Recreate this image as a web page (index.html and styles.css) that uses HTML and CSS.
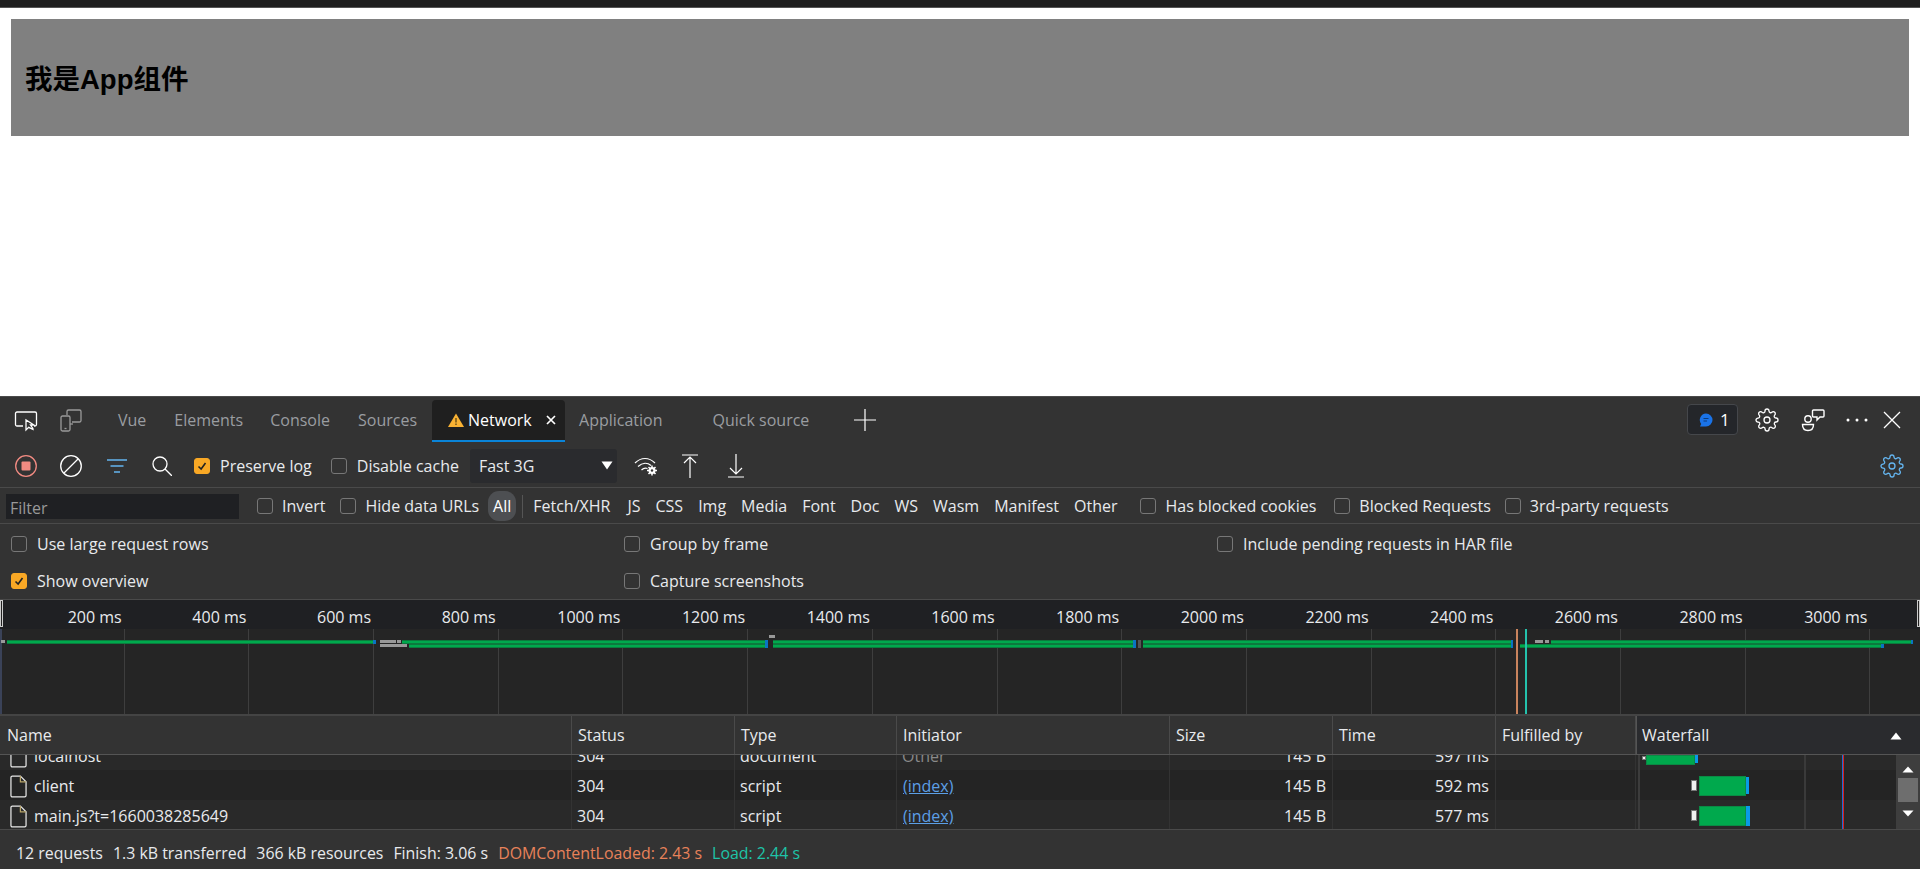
FILE: index.html
```html
<!DOCTYPE html>
<html lang="zh">
<head>
<meta charset="utf-8">
<title>App</title>
<link rel="stylesheet" href="styles.css">
</head>
<body>
<div class="topbar"></div>
<main class="page">
  <section class="app"><h2>我是App组件</h2></section>
</main>
<section class="devtools">
  <div class="tabbar">
    <svg class="ico ico-inspect" viewBox="0 0 24 24" fill="none" stroke="#fff" stroke-width="1.3"><path d="M9 18H3a1.5 1.5 0 0 1-1.500-1.500V5.500A1.500 1.500 0 0 1 3 4h18a1.500 1.500 0 0 1 1.500 1.500v11A1.500 1.500 0 0 1 21 18h-1"/><path d="M12 12l0 10 2.700-2.600 4.300 2-.1-1-2.400-3.400h3.500z" fill="#333"/></svg>
    <svg class="ico ico-device" viewBox="0 0 24 24" fill="none" stroke="#9a9a9a" stroke-width="1.300"><path d="M8 7V3.500A1.500 1.500 0 0 1 9.500 2h11A1.500 1.500 0 0 1 22 3.500v9a1.500 1.500 0 0 1-1.500 1.500H13"/><path d="M14 16h-3"/><rect x="2" y="8" width="9" height="15" rx="1.500"/><path d="M5.500 20.500h2"/></svg>
    <span class="tab tab-vue">Vue</span>
    <span class="tab tab-el">Elements</span>
    <span class="tab tab-con">Console</span>
    <span class="tab tab-src">Sources</span>
    <div class="tab-active">
      <svg class="warn" viewBox="0 0 16 14"><path d="M8 0.500L16 14H0z" fill="#f9b233"/><path d="M7.400 5h1.200v4.500H7.400zM7.400 10.500h1.200v1.500H7.400z" fill="#4a3a10"/></svg>
      <span class="tab-name">Network</span>
      <svg class="tab-x" viewBox="0 0 10 10" stroke="#fff" stroke-width="1.700"><path d="M1 1l8 8M9 1l-8 8"/></svg>
    </div>
    <span class="tab tab-app">Application</span>
    <span class="tab tab-qs">Quick source</span>
    <svg class="ico-plus" viewBox="0 0 22 22" stroke="#fff" stroke-width="1.200"><path d="M11 0v22M0 11h22"/></svg>
    <div class="tab-right">
      <div class="chip">
        <svg class="chip-ico" viewBox="0 0 14 14"><path d="M7 0.500a6.500 6.500 0 0 1 0 13H1l1.200-2.500A6.500 6.500 0 0 1 7 0.500z" fill="#1a73e8"/><path d="M4.500 5.500h5M4.500 8h3.500" stroke="#0d3b7a" stroke-width="1"/></svg>
        <span>1</span>
      </div>
      <svg class="gear gear-w" viewBox="0 0 24 24" fill="none" stroke="#fff" stroke-width="1.300"><use href="#gearp"/></svg>
      <svg class="ico-fb" viewBox="0 0 24 24" fill="none" stroke="#fff" stroke-width="1.400"><circle cx="7" cy="11" r="3.200"/><path d="M1.500 16.500h11c0 4-2 6-5.500 6s-5.500-2-5.500-6z"/><path d="M12.500 2h9.500a1 1 0 0 1 1 1v5a1 1 0 0 1-1 1h-3l-3 3v-3h-3.500a1 1 0 0 1-1-1V3a1 1 0 0 1 1-1z"/></svg>
      <svg class="ico-dots" viewBox="0 0 22 4" fill="#fff"><circle cx="2" cy="2" r="1.500"/><circle cx="11" cy="2" r="1.500"/><circle cx="20" cy="2" r="1.500"/></svg>
      <svg class="ico-close" viewBox="0 0 18 18" stroke="#fff" stroke-width="1.300"><path d="M1 1l16 16M17 1L1 17"/></svg>
    </div>
  </div>

  <div class="toolbar">
    <svg class="t-ico t-rec" viewBox="0 0 22 22" fill="none"><circle cx="11" cy="11" r="10.300" stroke="#f28b82" stroke-width="1.300"/><rect x="6.500" y="6.500" width="9" height="9" rx="1" fill="#f28b82"/></svg>
    <svg class="t-ico t-clr" viewBox="0 0 22 22" fill="none" stroke="#fff" stroke-width="1.300"><circle cx="11" cy="11" r="10.300"/><path d="M18 4L4 18"/></svg>
    <svg class="t-ico t-flt" viewBox="0 0 20 14" stroke="#64b5f0" stroke-width="1.400"><path d="M0 1h20M3.500 7h13M7 13h6"/></svg>
    <svg class="t-ico t-src" viewBox="0 0 20 20" fill="none" stroke="#fff" stroke-width="1.300"><circle cx="8" cy="8" r="7"/><path d="M13 13l7 7"/></svg>
    <label class="cb-row cb-preserve"><span class="cb on"><svg viewBox="0 0 16 16" fill="none" stroke="#222" stroke-width="1.800"><path d="M4 8.500l3 3 5-7"/></svg></span><span>Preserve log</span></label>
    <label class="cb-row cb-disable"><span class="cb"></span><span>Disable cache</span></label>
    <div class="select"><span>Fast 3G</span><svg class="sel-arrow" viewBox="0 0 12 9"><path d="M0.500 0.500h11L6 8.500z" fill="#fff"/></svg></div>
    <svg class="t-ico t-wifi" viewBox="0 0 24 20" fill="none" stroke="#fff" stroke-width="1.200"><path d="M1 7c6-6 14-6 20 0M4 10.500c4.500-4 9.500-4 13 -1M7.500 14c2-2 4-2.300 6-1.500"/><circle cx="18" cy="14.500" r="3.500" fill="#fff" stroke="none"/><path d="M18 9.500v10M13 14.500h10M14.500 11l7 7M21.500 11l-7 7" stroke-width="1.500"/><circle cx="18" cy="14.500" r="1.200" fill="#333" stroke="none"/></svg>
    <svg class="t-ico t-up" viewBox="0 0 18 24" fill="none" stroke="#fff" stroke-width="1.200"><path d="M1 1h16M9 24V3M3 9l6-6 6 6"/></svg>
    <svg class="t-ico t-down" viewBox="0 0 18 24" fill="none" stroke="#fff" stroke-width="1.200"><path d="M1 23h16M9 0v20M3 14l6 6 6-6"/></svg>
    <svg class="gear gear-b" viewBox="0 0 24 24" fill="none" stroke="#64b5f0" stroke-width="1.300"><use href="#gearp"/></svg>
  </div>

  <div class="filterbar">
    <div class="filter-input">Filter</div>
    <label class="cb-row fb-invert"><span class="cb"></span><span>Invert</span></label>
    <label class="cb-row fb-hide"><span class="cb"></span><span>Hide data URLs</span></label>
    <span class="all">All</span>
    <span class="sep"></span>
    <div class="types">
      <span class="type-first">Fetch/XHR</span><span>JS</span><span>CSS</span><span>Img</span><span>Media</span><span>Font</span><span>Doc</span><span>WS</span><span>Wasm</span><span>Manifest</span><span>Other</span>
    </div>
    <label class="cb-row fb-cookies"><span class="cb"></span><span>Has blocked cookies</span></label>
    <label class="cb-row fb-blocked"><span class="cb"></span><span>Blocked Requests</span></label>
    <label class="cb-row fb-third"><span class="cb"></span><span>3rd-party requests</span></label>
  </div>

  <div class="options">
    <label class="cb-row"><span class="cb"></span><span>Use large request rows</span></label>
    <label class="cb-row"><span class="cb"></span><span>Group by frame</span></label>
    <label class="cb-row"><span class="cb"></span><span>Include pending requests in HAR file</span></label>
    <label class="cb-row"><span class="cb on"><svg viewBox="0 0 16 16" fill="none" stroke="#222" stroke-width="1.800"><path d="M4 8.500l3 3 5-7"/></svg></span><span>Show overview</span></label>
    <label class="cb-row"><span class="cb"></span><span>Capture screenshots</span></label>
  </div>

  <div class="overview">
    <div class="ticks">
      <div class="tick"><span>200 ms</span></div><div class="tick"><span>400 ms</span></div><div class="tick"><span>600 ms</span></div><div class="tick"><span>800 ms</span></div><div class="tick"><span>1000 ms</span></div><div class="tick"><span>1200 ms</span></div><div class="tick"><span>1400 ms</span></div><div class="tick"><span>1600 ms</span></div><div class="tick"><span>1800 ms</span></div><div class="tick"><span>2000 ms</span></div><div class="tick"><span>2200 ms</span></div><div class="tick"><span>2400 ms</span></div><div class="tick"><span>2600 ms</span></div><div class="tick"><span>2800 ms</span></div><div class="tick"><span>3000 ms</span></div><div class="tick tick-last"></div>
    </div>
    <div class="handle handle-l"></div>
    <div class="handle handle-r"></div>
    <i class="ov s r1" style="left:1px;width:4px"></i>
    <i class="ov g r1" style="left:7px;width:366px"></i><i class="ov b r1" style="left:373px;width:3px"></i>
    <i class="ov s r1" style="left:380px;width:16px"></i><i class="ov s r1" style="left:397px;width:4px"></i>
    <i class="ov s r2" style="left:380px;width:27px"></i>
    <i class="ov g r1" style="left:402px;width:363px"></i><i class="ov g r2" style="left:409px;width:356px"></i>
    <i class="ov b r1" style="left:765px;width:3px"></i><i class="ov b r2" style="left:765px;width:3px"></i>
    <i class="ov s r0" style="left:769px;width:6px"></i>
    <i class="ov g r1" style="left:773px;width:360px"></i><i class="ov g r2" style="left:773px;width:360px"></i>
    <i class="ov b r1" style="left:1133px;width:3px"></i><i class="ov b r2" style="left:1133px;width:3px"></i>
    <i class="ov d r1" style="left:1138px;width:3px"></i><i class="ov d r2" style="left:1138px;width:3px"></i>
    <i class="ov g r1" style="left:1143px;width:368px"></i><i class="ov g r2" style="left:1143px;width:368px"></i>
    <i class="ov b r1" style="left:1511px;width:2px"></i><i class="ov b r2" style="left:1511px;width:2px"></i>
    <i class="ov g r2" style="left:1520px;width:361px"></i><i class="ov b r2" style="left:1881px;width:3px"></i>
    <i class="ov s r1" style="left:1535px;width:8px"></i><i class="ov s r1" style="left:1545px;width:4px"></i>
    <i class="ov g r1" style="left:1551px;width:360px"></i><i class="ov b r1" style="left:1911px;width:2px"></i>
    <i class="vmark vm-o"></i><i class="vmark vm-t"></i>
  </div>

  <div class="thead">
    <div class="th">Name</div><div class="th">Status</div><div class="th">Type</div><div class="th">Initiator</div><div class="th">Size</div><div class="th">Time</div><div class="th">Fulfilled by</div>
    <div class="th th-wf">Waterfall<svg class="sort" viewBox="0 0 12 8"><path d="M6 0.500L11.500 7.500H0.500z" fill="#fff"/></svg></div>
  </div>

  <div class="tbody">
    <div class="rows">
      <div class="tr tr-first alt"><div class="td td-name"><svg class="file" viewBox="0 0 18 24" fill="none" stroke="#e8e8e8" stroke-width="1.300"><path d="M1 2.500A1.500 1.500 0 0 1 2.500 1H11l6 6v14.500a1.500 1.500 0 0 1-1.500 1.500h-13A1.500 1.500 0 0 1 1 21.500z"/><path d="M11 1v6h6" stroke="#b8a56a"/></svg>localhost</div><div class="td">304</div><div class="td">document</div><div class="td muted">Other</div><div class="td num">145 B</div><div class="td num">597 ms</div><div class="td"></div><div class="td"></div></div>
      <div class="tr"><div class="td td-name"><svg class="file" viewBox="0 0 18 24" fill="none" stroke="#e8e8e8" stroke-width="1.300"><path d="M1 2.500A1.500 1.500 0 0 1 2.500 1H11l6 6v14.500a1.500 1.500 0 0 1-1.500 1.500h-13A1.500 1.500 0 0 1 1 21.500z"/><path d="M11 1v6h6" stroke="#b8a56a"/></svg>client</div><div class="td">304</div><div class="td">script</div><div class="td link">(index)</div><div class="td num">145 B</div><div class="td num">592 ms</div><div class="td"></div><div class="td"></div></div>
      <div class="tr alt"><div class="td td-name"><svg class="file" viewBox="0 0 18 24" fill="none" stroke="#e8e8e8" stroke-width="1.300"><path d="M1 2.500A1.500 1.500 0 0 1 2.500 1H11l6 6v14.500a1.500 1.500 0 0 1-1.500 1.500h-13A1.500 1.500 0 0 1 1 21.500z"/><path d="M11 1v6h6" stroke="#b8a56a"/></svg>main.js?t=1660038285649</div><div class="td">304</div><div class="td">script</div><div class="td link">(index)</div><div class="td num">145 B</div><div class="td num">577 ms</div><div class="td"></div><div class="td"></div></div>
    </div>
    <div class="wf">
      <i class="wf-grid"></i>
      <i class="wf-line"></i>
      <i class="wb wait" style="left:2px;top:1px;width:4px;height:4px"></i>
      <i class="wb green" style="left:6px;top:0;width:49px;height:10px"></i>
      <i class="wb blue" style="left:55px;top:0;width:3px;height:8px"></i>
      <i class="wb wait" style="left:51px;top:25px;width:6px;height:11px"></i>
      <i class="wb green" style="left:59px;top:21px;width:47px;height:20px"></i>
      <i class="wb blue" style="left:106px;top:22px;width:3px;height:17px"></i>
      <i class="wb wait" style="left:51px;top:55px;width:6px;height:11px"></i>
      <i class="wb green" style="left:59px;top:51px;width:47px;height:20px"></i>
      <i class="wb blue" style="left:106px;top:51px;width:4px;height:20px"></i>
      <div class="scrollbar">
        <svg class="sb-arrow" viewBox="0 0 12 7"><path d="M6 0.500L11.500 6.500H0.500z" fill="#fff"/></svg>
        <div class="sb-thumb"></div>
        <svg class="sb-arrow" viewBox="0 0 12 7"><path d="M0.500 0.500h11L6 6.500z" fill="#fff"/></svg>
      </div>
    </div>
  </div>

  <div class="statusbar">
    <span>12 requests</span><span>1.3 kB transferred</span><span>366 kB resources</span><span>Finish: 3.06 s</span><span class="dcl">DOMContentLoaded: 2.43 s</span><span class="load">Load: 2.44 s</span>
  </div>
</section>
<svg class="defs" aria-hidden="true"><defs><g id="gearp"><path d="M12 15a3 3 0 1 0 0-6 3 3 0 0 0 0 6z"/><path d="M19.400 15a1.650 1.650 0 0 0 .33 1.820l.06.06a2 2 0 0 1 0 2.830 2 2 0 0 1-2.830 0l-.06-.06a1.650 1.650 0 0 0-1.820-.33 1.650 1.650 0 0 0-1 1.510V21a2 2 0 0 1-2 2 2 2 0 0 1-2-2v-.09A1.650 1.650 0 0 0 9 19.400a1.650 1.650 0 0 0-1.820.33l-.06.06a2 2 0 0 1-2.830 0 2 2 0 0 1 0-2.830l.06-.06a1.650 1.650 0 0 0 .33-1.820 1.650 1.650 0 0 0-1.510-1H3a2 2 0 0 1-2-2 2 2 0 0 1 2-2h.09A1.650 1.650 0 0 0 4.600 9a1.650 1.650 0 0 0-.33-1.820l-.06-.06a2 2 0 0 1 0-2.830 2 2 0 0 1 2.830 0l.06.06a1.650 1.650 0 0 0 1.820.33H9a1.650 1.650 0 0 0 1-1.510V3a2 2 0 0 1 2-2 2 2 0 0 1 2 2v.09a1.650 1.650 0 0 0 1 1.510 1.650 1.650 0 0 0 1.820-.33l.06-.06a2 2 0 0 1 2.830 0 2 2 0 0 1 0 2.830l-.06.06a1.650 1.650 0 0 0-.33 1.820V9a1.650 1.650 0 0 0 1.510 1H21a2 2 0 0 1 2 2 2 2 0 0 1-2 2h-.09a1.650 1.650 0 0 0-1.510 1z"/></g></defs></svg>
</body>
</html>
```
FILE: styles.css
```css
* { box-sizing: border-box; }
html, body { margin: 0; height: 100%; overflow: hidden; }
body {
  display: flex; flex-direction: column; height: 869px; background: #fff;
  font-family: "Open Sans", "Noto Sans", sans-serif; font-size: 16px; color: #e8eaed;
}
.defs { position: absolute; width: 0; height: 0; }
.topbar { height: 8px; background: #1f1f1f; border-bottom: 1px solid #555; flex: none; }
.page { flex: 1; padding: 11px 11px 0; min-height: 0; }
.app { height: 117px; background: #808080; display: flex; align-items: center; padding: 0 0 2px 14px; }
.app h2 { margin: 0; font: bold 27.500px "Liberation Sans", "Noto Sans CJK SC", sans-serif; color: #000; }

.devtools { flex: none; height: 473px; background: #333; border-top: 1px solid #4a4a4a; display: flex; flex-direction: column; }

.tabbar { height: 47px; display: flex; align-items: center; flex: none; background: #333; padding: 0 0 2px 14px; }
.ico { width: 24px; height: 24px; flex: none; }
.ico-device { margin-left: 21px; }
.tab { color: #9a9da1; white-space: nowrap; }
.tab-vue { margin-left: 35px; }
.tab-el { margin-left: 28px; }
.tab-con { margin-left: 27px; }
.tab-src { margin-left: 28px; }
.tab-active { margin-left: 15px; align-self: flex-start; margin-top: 3px; height: 42px; width: 133px; background: #1f1f1f; border-bottom: 2px solid #0a84d8; border-radius: 4px 4px 0 0; display: flex; align-items: center; padding-left: 16px; color: #fff; }
.warn { width: 16px; height: 14px; flex: none; }
.tab-name { margin-left: 4px; }
.tab-x { width: 10px; height: 10px; margin-left: auto; margin-right: 9px; }
.tab-app { margin-left: 14px; }
.tab-qs { margin-left: 50px; }
.ico-plus { width: 22px; height: 22px; margin-left: 45px; flex: none; }
.tab-right { margin-left: auto; display: flex; align-items: center; padding-right: 19px; }
.chip { width: 51px; height: 31px; background: #24262a; border: 1px solid #45474b; border-radius: 4px; display: flex; align-items: center; padding-left: 11px; gap: 7px; color: #fff; font-size: 17px; }
.chip-ico { width: 14px; height: 14px; }
.gear { width: 24px; height: 24px; flex: none; }
.gear-w { margin-left: 17px; }
.ico-fb { width: 24px; height: 24px; margin-left: 22px; }
.ico-dots { width: 22px; height: 4px; margin-left: 21px; }
.ico-close { width: 18px; height: 18px; margin-left: 15px; }

.toolbar { height: 44px; flex: none; display: flex; align-items: center; border-bottom: 1px solid #4a4a4a; padding: 0 16px 0 15px; }
.t-ico { flex: none; }
.t-rec { width: 22px; height: 22px; }
.t-clr { width: 22px; height: 22px; margin-left: 23px; }
.t-flt { width: 20px; height: 14px; margin-left: 25px; }
.t-src { width: 20px; height: 20px; margin-left: 25px; }
.cb-row { display: flex; align-items: center; gap: 10px; white-space: nowrap; color: #e8eaed; }
.cb { width: 16px; height: 16px; flex: none; border: 1px solid #777; border-radius: 3px; background: #333; display: block; }
.cb.on { background: #f9a825; border-color: #f9a825; }
.cb.on svg { display: block; width: 14px; height: 14px; }
.cb-preserve { margin-left: 22px; }
.cb-disable { margin-left: 19px; }
.select { width: 147px; height: 34px; margin-left: 11px; background: #2a2b2e; border-radius: 3px; display: flex; align-items: center; padding-left: 9px; }
.sel-arrow { width: 12px; height: 9px; margin-left: auto; margin-right: 4px; }
.t-wifi { width: 24px; height: 20px; margin-left: 17px; }
.t-up { width: 18px; height: 24px; margin-left: 23px; }
.t-down { width: 18px; height: 24px; margin-left: 28px; }
.gear-b { margin-left: auto; }

.filterbar { height: 36px; flex: none; display: flex; align-items: center; border-bottom: 1px solid #4a4a4a; padding: 1px 0 0 6px; }
.filter-input { width: 233px; height: 25px; background: #1f2023; color: #999; padding: 2px 4px 0; line-height: 24px; }
.fb-invert { margin-left: 18px; gap: 9px; }
.fb-hide { margin-left: 14px; }
.all { margin-left: 9px; width: 28px; height: 30px; background: #4d4f52; border-radius: 11px; display: flex; align-items: center; justify-content: center; color: #fff; }
.sep { width: 1px; height: 23px; background: #555; margin-left: 6px; }
.types { display: flex; gap: 15px; margin-left: 10px; }
.type-first { margin-right: 2px; }
.fb-cookies { margin-left: 23px; gap: 9px; }
.fb-blocked { margin-left: 18px; gap: 9px; }
.fb-third { margin-left: 14px; gap: 9px; }

.options { height: 76px; flex: none; display: grid; grid-template-columns: 613px 593px 1fr; grid-template-rows: 1fr 1fr; padding: 2px 0 0 11px; align-items: center; border-bottom: 1px solid #4a4a4a; }

.overview { height: 116px; flex: none; background: #252525; position: relative; border-bottom: 2px solid #444; overflow: hidden; box-shadow: inset 2px 0 0 #3a4258; }
.ticks { display: flex; height: 100%; }
.tick { width: 124.700px; flex: none; border-right: 1px solid #3e3e3e; }
.tick span { display: flex; height: 29px; align-items: center; justify-content: flex-end; padding: 4px 3px 0 0; color: #e8eaed; background: #1f2023; margin-right: -1px; }
.tick-last { border-right: 0; }
.tick-last::before { content: ""; display: block; height: 29px; background: #1f2023; }
.handle { position: absolute; top: 0; width: 3px; height: 27px; background: #222; border: 1px solid #ccc; }
.handle-l { left: 0; }
.handle-r { right: 0; }
.ov { position: absolute; height: 4px; display: block; }
.r0 { top: 35px; }
.r1 { top: 40px; }
.r2 { top: 44px; }
.g { background: #00a94d; border-block: 1px solid #0c7a3e; }
.b { background: #0a74c2; }
.s { background: #999; height: 3px; }
.d { background: #555; }
.vmark { position: absolute; top: 29px; bottom: 0; display: block; }
.vm-o { left: 1516px; width: 2px; background: #c9835d; }
.vm-t { left: 1525px; width: 2px; background: #24c2ad; }

.thead { height: 39px; flex: none; display: grid; grid-template-columns: 572px 163px 162px 273px 163px 163px 140px 1fr; border-bottom: 1px solid #555; }
.th { display: flex; align-items: center; padding-left: 6px; border-right: 1px solid #4a4a4a; color: #e8eaed; }
.th:first-child { padding-left: 7px; }
.th-wf { background: #2a2b2e; border-right: 0; padding-left: 5px; position: relative; border-left: 1px solid #555; }
.sort { width: 12px; height: 8px; position: absolute; right: 18px; top: 16px; }

.tbody { height: 75px; flex: none; position: relative; overflow: hidden; border-bottom: 1px solid #4a4a4a; background: #262626; }
.rows { margin-top: -15px; }
.tr { height: 30px; display: grid; grid-template-columns: 572px 163px 162px 273px 163px 163px 140px 1fr; align-items: stretch; background: #242424; }
.tr.alt { background: #292929; }
.td { display: flex; align-items: center; padding: 2px 0 0 5px; border-right: 1px solid #333; white-space: nowrap; color: #e8eaed; }
.td-name { padding-left: 10px; gap: 7px; }
.num { justify-content: flex-end; padding: 2px 6px 0 0; }
.muted { color: #8a8a8a; }
.link { color: #5c9fe6; text-decoration: underline; padding-left: 6px; }
.file { width: 17px; height: 23px; flex: none; }
.wf { position: absolute; left: 1638px; top: 0; right: 0; bottom: 0; border-left: 2px solid #3c3c3c; }
.wf-grid { position: absolute; left: 164px; top: 0; bottom: 0; width: 2px; background: #3a3a3a; display: block; }
.wf-line { position: absolute; left: 202px; top: 0; bottom: 0; width: 2px; background: linear-gradient(90deg, #1a6bd8 50%, #d82020 50%); display: block; }
.wb { position: absolute; display: block; }
.wait { background: #f0f0f0; border: 1px solid #777; }
.green { background: #00a94d; border: 1px solid #0b8a45; }
.blue { background: #0a9ae8; }
.scrollbar { position: absolute; right: 0; top: 0; bottom: 0; width: 24px; background: #3e3e3e; display: flex; flex-direction: column; align-items: center; padding-top: 11px; }
.sb-arrow { width: 12px; height: 7px; flex: none; }
.sb-thumb { width: 20px; height: 24px; background: #6e6e6e; margin: 5px 0 8px; flex: none; }

.statusbar { flex: 1; display: flex; align-items: center; gap: 10px; padding: 6px 0 0 16px; color: #e8eaed; white-space: nowrap; font-size: 15.900px; }
.dcl { color: #e8825a; }
.load { color: #1ec4a8; }
```
